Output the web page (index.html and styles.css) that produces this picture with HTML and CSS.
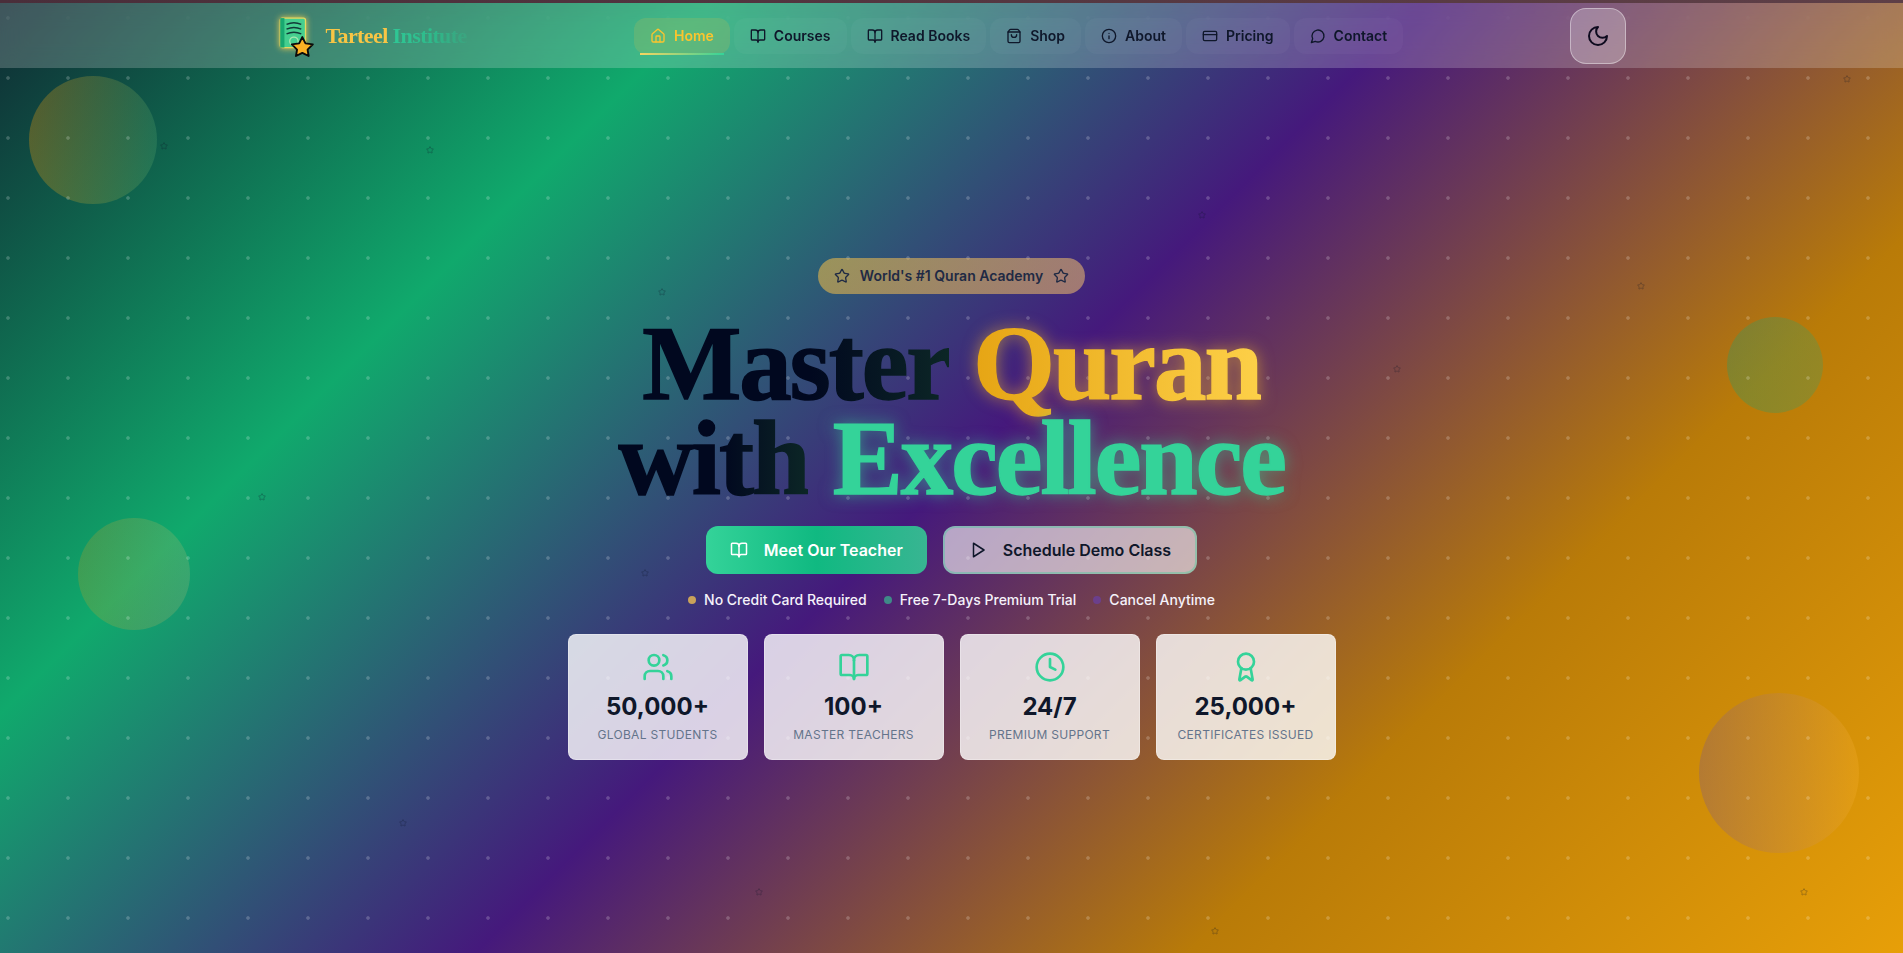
FILE: index.html
```html
<!DOCTYPE html>
<html lang="en">
<head>
  <meta charset="UTF-8" />
  <meta name="viewport" content="width=device-width, initial-scale=1.0" />
  <title>Tarteel Institute</title>
  <link rel="stylesheet" href="styles.css">
</head>
<body>
  <svg class="sprite" aria-hidden="true">
    <symbol id="i-home" viewBox="0 0 24 24"><path d="M15 21v-8a1 1 0 0 0-1-1h-4a1 1 0 0 0-1 1v8"/><path d="M3 10a2 2 0 0 1 .709-1.528l7-6a2 2 0 0 1 2.582 0l7 6A2 2 0 0 1 21 10v9a2 2 0 0 1-2 2H5a2 2 0 0 1-2-2z"/></symbol>
    <symbol id="i-book" viewBox="0 0 24 24"><path d="M12 7v14"/><path d="M3 18a1 1 0 0 1-1-1V4a1 1 0 0 1 1-1h5a4 4 0 0 1 4 4 4 4 0 0 1 4-4h5a1 1 0 0 1 1 1v13a1 1 0 0 1-1 1h-6a3 3 0 0 0-3 3 3 3 0 0 0-3-3z"/></symbol>
    <symbol id="i-bag" viewBox="0 0 24 24"><path d="M16 10a4 4 0 0 1-8 0"/><path d="M3.103 6.034h17.794"/><path d="M3.4 5.467a2 2 0 0 0-.4 1.2V20a2 2 0 0 0 2 2h14a2 2 0 0 0 2-2V6.667a2 2 0 0 0-.4-1.2l-2-2.667A2 2 0 0 0 17 2H7a2 2 0 0 0-1.6.8z"/></symbol>
    <symbol id="i-info" viewBox="0 0 24 24"><circle cx="12" cy="12" r="10"/><path d="M12 16v-4"/><path d="M12 8h.01"/></symbol>
    <symbol id="i-card" viewBox="0 0 24 24"><rect x="2" y="5" width="20" height="14" rx="2"/><line x1="2" y1="10" x2="22" y2="10"/></symbol>
    <symbol id="i-chat" viewBox="0 0 24 24"><path d="M7.9 20A9 9 0 1 0 4 16.1L2 22Z"/></symbol>
    <symbol id="i-moon" viewBox="0 0 24 24"><path d="M12 3a6 6 0 0 0 9 9 9 9 0 1 1-9-9Z"/></symbol>
    <symbol id="i-star" viewBox="0 0 24 24"><path d="M11.525 2.295a.53.53 0 0 1 .95 0l2.31 4.679a2.123 2.123 0 0 0 1.595 1.16l5.166.756a.53.53 0 0 1 .294.904l-3.736 3.638a2.123 2.123 0 0 0-.611 1.878l.882 5.14a.53.53 0 0 1-.771.56l-4.618-2.428a2.122 2.122 0 0 0-1.973 0L6.396 21.01a.53.53 0 0 1-.77-.56l.881-5.139a2.122 2.122 0 0 0-.611-1.879L2.16 9.795a.53.53 0 0 1 .294-.906l5.165-.755a2.122 2.122 0 0 0 1.597-1.16z"/></symbol>
    <symbol id="i-play" viewBox="0 0 24 24"><polygon points="6 3 20 12 6 21 6 3"/></symbol>
    <symbol id="i-users" viewBox="0 0 24 24"><path d="M16 21v-2a4 4 0 0 0-4-4H6a4 4 0 0 0-4 4v2"/><circle cx="9" cy="7" r="4"/><path d="M22 21v-2a4 4 0 0 0-3-3.87"/><path d="M16 3.13a4 4 0 0 1 0 7.75"/></symbol>
    <symbol id="i-clock" viewBox="0 0 24 24"><circle cx="12" cy="12" r="10"/><polyline points="12 6 12 12 16 14"/></symbol>
    <symbol id="i-award" viewBox="0 0 24 24"><path d="m15.477 12.89 1.515 8.526a.5.5 0 0 1-.81.47l-3.58-2.687a1 1 0 0 0-1.197 0l-3.586 2.686a.5.5 0 0 1-.81-.469l1.514-8.526"/><circle cx="12" cy="8" r="6"/></symbol>
  </svg>

  <!-- background decoration -->
  <div class="decor">
    <span class="blob blob-1"></span>
    <span class="blob blob-2"></span>
    <span class="blob blob-3"></span>
    <span class="blob blob-4"></span>
    <div class="dots"></div>
    <svg class="spark spark-1"><use href="#i-star"/></svg>
    <svg class="spark spark-2"><use href="#i-star"/></svg>
    <svg class="spark spark-3"><use href="#i-star"/></svg>
    <svg class="spark spark-4"><use href="#i-star"/></svg>
    <svg class="spark spark-5"><use href="#i-star"/></svg>
    <svg class="spark spark-6"><use href="#i-star"/></svg>
    <svg class="spark spark-7"><use href="#i-star"/></svg>
    <svg class="spark spark-8"><use href="#i-star"/></svg>
    <svg class="spark spark-9"><use href="#i-star"/></svg>
    <svg class="spark spark-10"><use href="#i-star"/></svg>
    <svg class="spark spark-11"><use href="#i-star"/></svg>
    <svg class="spark spark-12"><use href="#i-star"/></svg>
    <svg class="spark spark-13"><use href="#i-star"/></svg>
  </div>

  <div class="topline"></div>
  <header class="navbar">
    <div class="nav-inner">
      <a class="brand" href="#">
        <svg class="brand-mark" viewBox="0 0 36 38">
          <rect x="3" y="2" width="24" height="28" rx="2" class="mark-cover"/>
          <rect x="3" y="2" width="4" height="28" class="mark-spine"/>
          <path d="M9 8q7-3 14 0M9 12.5q7-3 14 0M9 17q7-3 14 0" class="mark-lines"/>
          <circle cx="16" cy="24" r="4" class="mark-ring"/>
          <path d="M24 20l3 6 7 1-5 5 1 6-6-3-6 3 1-6-5-5 7-1z" class="mark-star"/>
        </svg>
        <span class="brand-name"><span class="brand-a">Tarteel</span> <span class="brand-b">Institute</span></span>
      </a>
      <nav class="nav-links">
        <a class="nav-link active" href="#"><svg class="ico"><use href="#i-home"/></svg>Home</a>
        <a class="nav-link" href="#"><svg class="ico"><use href="#i-book"/></svg>Courses</a>
        <a class="nav-link" href="#"><svg class="ico"><use href="#i-book"/></svg>Read Books</a>
        <a class="nav-link" href="#"><svg class="ico"><use href="#i-bag"/></svg>Shop</a>
        <a class="nav-link" href="#"><svg class="ico"><use href="#i-info"/></svg>About</a>
        <a class="nav-link" href="#"><svg class="ico"><use href="#i-card"/></svg>Pricing</a>
        <a class="nav-link" href="#"><svg class="ico"><use href="#i-chat"/></svg>Contact</a>
      </nav>
      <button class="theme-btn" type="button"><svg class="ico-moon"><use href="#i-moon"/></svg></button>
    </div>
  </header>

  <main class="hero">
    <div class="badge">
      <svg class="ico"><use href="#i-star"/></svg>
      <span>World's #1 Quran Academy</span>
      <svg class="ico"><use href="#i-star"/></svg>
    </div>

    <h1 class="title">
      <span class="t-dark">Master</span> <span class="t-gold">Quran</span><br>
      <span class="t-dark">with</span> <span class="t-green">Excellence</span>
    </h1>

    <div class="actions">
      <a class="btn btn-primary" href="#"><svg class="ico"><use href="#i-book"/></svg>Meet Our Teacher</a>
      <a class="btn btn-ghost" href="#"><svg class="ico"><use href="#i-play"/></svg>Schedule Demo Class</a>
    </div>

    <ul class="perks">
      <li><span class="dot dot-amber"></span>No Credit Card Required</li>
      <li><span class="dot dot-teal"></span>Free 7-Days Premium Trial</li>
      <li><span class="dot dot-purple"></span>Cancel Anytime</li>
    </ul>

    <div class="stats">
      <div class="stat">
        <svg class="stat-ico"><use href="#i-users"/></svg>
        <div class="stat-num">50,000+</div>
        <div class="stat-label">Global Students</div>
      </div>
      <div class="stat">
        <svg class="stat-ico"><use href="#i-book"/></svg>
        <div class="stat-num">100+</div>
        <div class="stat-label">Master Teachers</div>
      </div>
      <div class="stat">
        <svg class="stat-ico"><use href="#i-clock"/></svg>
        <div class="stat-num">24/7</div>
        <div class="stat-label">Premium Support</div>
      </div>
      <div class="stat">
        <svg class="stat-ico"><use href="#i-award"/></svg>
        <div class="stat-num">25,000+</div>
        <div class="stat-label">Certificates Issued</div>
      </div>
    </div>
  </main>
</body>
</html>
```

FILE: styles.css
```css
:root {
  --green: #34d399;
  --gold: #fbbf24;
  --ink: #0f172a;
}
* { box-sizing: border-box; }
html, body { height: 100%; }
body {
  margin: 0;
  position: relative;
  overflow: hidden;
  display: flex;
  flex-direction: column;
  font-family: Inter, "Liberation Sans", sans-serif;
  color: var(--ink);
  background: linear-gradient(135deg, #0f2a33 0%, #10a96c 25%, #45197c 50%, #b97b08 75%, #e79f08 100%);
}
a { color: inherit; text-decoration: none; }
.sprite { display: none; }

/* icons */
svg use { fill: none; stroke: currentColor; }
.ico, .ico-moon, .stat-ico {
  fill: none;
  stroke: currentColor;
  stroke-width: 2;
  stroke-linecap: round;
  stroke-linejoin: round;
  flex: none;
}
.ico { width: 16px; height: 16px; }
.ico-moon { width: 24px; height: 24px; }
.stat-ico { width: 32px; height: 32px; color: var(--green); display: block; margin: 0 auto 8px; }

/* decoration */
.decor { position: absolute; inset: 0; overflow: hidden; }
.blob { position: absolute; border-radius: 50%; }
.blob-1 { left: 29px; top: 76px; width: 128px; height: 128px; background: linear-gradient(90deg, rgba(245, 158, 11, 0.3), rgba(110, 190, 120, 0.2)); }
.blob-2 { left: 78px; top: 518px; width: 112px; height: 112px; background: linear-gradient(90deg, rgba(245, 158, 11, 0.2), rgba(190, 190, 120, 0.22)); }
.blob-3 { left: 1727px; top: 317px; width: 96px; height: 96px; background: linear-gradient(90deg, rgba(60, 150, 90, 0.4), rgba(90, 150, 80, 0.4)); }
.blob-4 { left: 1699px; top: 693px; width: 160px; height: 160px; background: linear-gradient(90deg, rgba(130, 90, 130, 0.35), rgba(240, 170, 40, 0.35)); }
.dots {
  position: absolute;
  inset: 0;
  background-image: radial-gradient(circle at 8px 18px, rgba(255, 255, 255, 0.2) 1.4px, transparent 2.2px);
  background-size: 60px 60px;
}
.spark { position: absolute; width: 8px; height: 8px; fill: none; stroke: #e0b040; stroke-width: 2.5; opacity: 0.35; }
.spark-1 { left: 160px; top: 142px; }
.spark-2 { left: 426px; top: 146px; }
.spark-3 { left: 658px; top: 288px; }
.spark-4 { left: 1198px; top: 211px; }
.spark-5 { left: 1637px; top: 282px; }
.spark-6 { left: 1393px; top: 365px; }
.spark-7 { left: 258px; top: 493px; }
.spark-8 { left: 641px; top: 569px; }
.spark-9 { left: 399px; top: 819px; }
.spark-10 { left: 755px; top: 888px; }
.spark-11 { left: 1211px; top: 927px; }
.spark-12 { left: 1843px; top: 75px; }
.spark-13 { left: 1800px; top: 888px; }

/* navbar */
.topline { position: relative; height: 3px; background: linear-gradient(90deg, #4a2e3a, #5e3f47); }
.navbar {
  position: relative;
  height: 65px;
  background: rgba(255, 255, 255, 0.2);
  backdrop-filter: blur(12px);
}
.nav-inner {
  width: 1350px;
  height: 100%;
  margin: 0 auto;
  display: flex;
  align-items: center;
  justify-content: space-between;
}
.brand { display: flex; align-items: center; gap: 11px; }
.brand-mark { width: 38px; height: 40px; overflow: visible; }
.mark-cover { fill: #45cf8f; stroke: #e6d860; stroke-width: 1.2; filter: drop-shadow(0 0 3px #f5d050); }
.mark-spine { fill: #18a870; }
.mark-lines { fill: none; stroke: #123a38; stroke-width: 1.4; }
.mark-ring { fill: none; stroke: #a8e8b0; stroke-width: 1.2; }
.mark-star { fill: #fbb124; stroke: #0b0b0b; stroke-width: 1.8; stroke-linejoin: round; }
.brand-name { font-family: "Liberation Serif", serif; font-weight: 700; font-size: 22px; letter-spacing: -0.6px; }
.brand-a { color: #f8c545; }
.brand-b {
  background: linear-gradient(90deg, #2fc795, #2fb98a 55%, rgba(50, 190, 140, 0.25));
  -webkit-background-clip: text;
  background-clip: text;
  color: transparent;
}
.nav-links { display: flex; gap: 4px; }
.nav-link {
  position: relative;
  display: flex;
  align-items: center;
  gap: 8px;
  height: 36px;
  padding: 0 16px;
  border-radius: 12px;
  font-size: 14px;
  font-weight: 600;
  background: rgba(255, 255, 255, 0.03);
}
.nav-link.active { color: #fbc52e; background: rgba(245, 190, 60, 0.16); }
.nav-link.active::after {
  content: "";
  position: absolute;
  left: 6px;
  right: 6px;
  bottom: -1px;
  height: 2px;
  background: linear-gradient(90deg, #f8d560, #34d399);
}
.theme-btn {
  width: 56px;
  height: 56px;
  display: flex;
  align-items: center;
  justify-content: center;
  padding: 0;
  color: #0d0a1e;
  background: rgba(255, 255, 255, 0.25);
  border: 1px solid rgba(255, 255, 255, 0.4);
  border-radius: 16px;
}

/* hero */
.hero {
  position: relative;
  flex: 1;
  display: flex;
  flex-direction: column;
  align-items: center;
  justify-content: center;
  padding-bottom: 4px;
}
.badge {
  display: flex;
  align-items: center;
  gap: 10px;
  height: 36px;
  padding: 0 16px;
  border-radius: 18px;
  font-size: 14px;
  font-weight: 600;
  color: #1f2a44;
  background: linear-gradient(90deg, rgba(245, 190, 70, 0.55), rgba(240, 190, 110, 0.55));
}
.title {
  margin: 22px 0 20px;
  font-family: "Liberation Serif", serif;
  font-weight: 700;
  font-size: 105px;
  line-height: 95px;
  letter-spacing: -2px;
  text-align: center;
  white-space: nowrap;
}
.t-dark {
  background: linear-gradient(90deg, #01081f 55%, #0c2626);
  -webkit-background-clip: text;
  background-clip: text;
  color: transparent;
  -webkit-text-stroke: 1.5px transparent;
}
.t-gold {
  background: linear-gradient(90deg, #e6a514, #fdd048);
  -webkit-background-clip: text;
  background-clip: text;
  color: transparent;
  -webkit-text-stroke: 1.5px transparent;
  filter: drop-shadow(0 0 8px rgba(251, 191, 36, 0.55));
}
.t-green {
  color: var(--green);
  -webkit-text-stroke: 1.5px var(--green);
  filter: drop-shadow(0 0 8px rgba(52, 211, 153, 0.55));
}
.actions { display: flex; gap: 16px; }
.btn {
  display: flex;
  align-items: center;
  gap: 16px;
  height: 48px;
  padding: 0 24px;
  border-radius: 12px;
  font-size: 16px;
  font-weight: 600;
}
.btn .ico { width: 18px; height: 18px; }
.btn-primary { color: #fff; background: linear-gradient(90deg, #34d399, #10b981 50%, #38b592); }
.btn-ghost { background: rgba(255, 255, 255, 0.6); border: 2px solid rgba(52, 211, 153, 0.35); }
.perks {
  display: flex;
  gap: 17px;
  margin: 16px 0 24px;
  padding: 0;
  list-style: none;
  font-size: 14px;
  font-weight: 500;
  line-height: 20px;
  color: #f5f2fa;
}
.perks li { display: flex; align-items: center; gap: 8px; }
.dot { width: 8px; height: 8px; border-radius: 50%; }
.dot-amber { background: #c9a25a; }
.dot-teal { background: #3f8a88; }
.dot-purple { background: #6b3f8c; }
.stats { display: grid; grid-template-columns: repeat(4, 180px); gap: 16px; }
.stat {
  padding: 16px;
  text-align: center;
  background: rgba(255, 255, 255, 0.8);
  border: 1px solid rgba(255, 255, 255, 0.3);
  border-radius: 8px;
}
.stat-num { font-size: 24px; font-weight: 700; line-height: 32px; margin-bottom: 4px; }
.stat-label { font-size: 12px; line-height: 16px; text-transform: uppercase; color: #64748b; letter-spacing: 0.3px; white-space: nowrap; }
```
